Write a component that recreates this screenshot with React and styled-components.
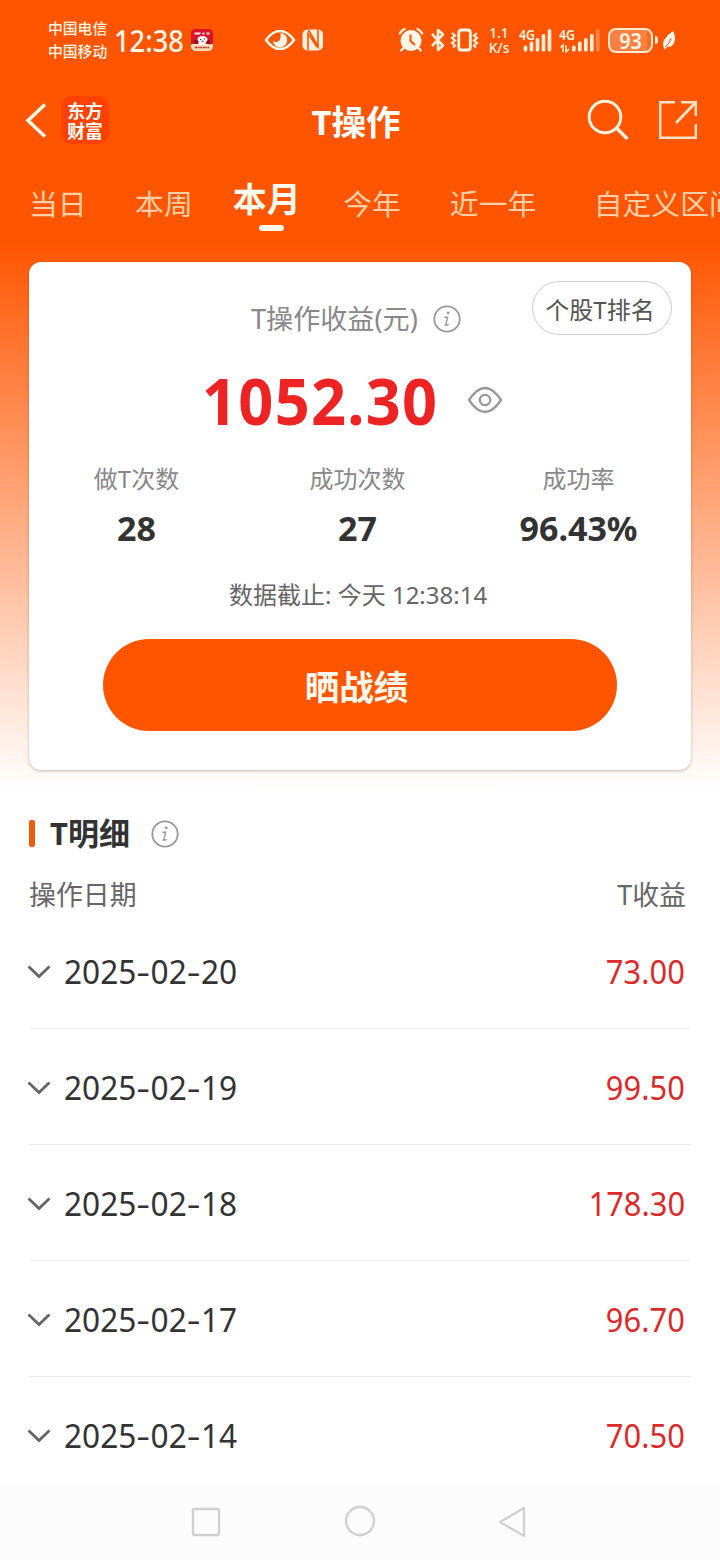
import React from "react";
import styled, { createGlobalStyle } from "styled-components";

const Global = createGlobalStyle`
  * { box-sizing: border-box; }
  body {
    margin: 0;
    background: #fff;
    font-family: "Noto Sans", "Noto Sans CJK SC", sans-serif;
    color: #333;
  }
`;

const Screen = styled.div`
  width: 720px;
  height: 1560px;
  overflow: hidden;
  display: flex;
  flex-direction: column;
  background: linear-gradient(180deg, #ff5500 0, #ff5500 240px, #fff 790px);
`;

/* Text with an optional horizontal condense, kept on one line */
const Label = styled.span`
  display: inline-block;
  white-space: nowrap;
  line-height: 1;
  font-size: ${(p) => p.$size}px;
  font-weight: ${(p) => p.$weight || 400};
  color: ${(p) => p.$color || "inherit"};
  letter-spacing: ${(p) => p.$track || 0}px;
  transform: scaleX(${(p) => p.$stretch || 1});
  transform-origin: ${(p) => p.$origin || "left"} center;
`;

const StatusBar = styled.div`
  height: 80px;
  flex: none;
  display: flex;
  align-items: center;
  padding-left: 48px;
  color: #fff6e8;
`;
const Carriers = styled.div`
  display: flex;
  flex-direction: column;
  gap: 7.5px;
  width: 66px;
`;
const Clock = styled.div`
  width: 75px;
  display: flex;
  padding-top: 2px;
`;
const StatusIcon = styled.svg`
  flex: none;
  display: block;
  margin-left: ${(p) => p.$gap || 0}px;
`;
const Speed = styled.div`
  display: flex;
  flex-direction: column;
  align-items: center;
  width: 24px;
  margin-left: 8px;
  gap: 1px;
  line-height: 14px;
`;
const SpeedText = styled.span`
  font-size: 13.8px;
  line-height: 14px;
  font-weight: 500;
  white-space: nowrap;
`;
const Signal = styled.div`
  position: relative;
  width: ${(p) => p.$width}px;
  height: 26px;
  margin-left: ${(p) => p.$gap}px;
`;
const SignalTag = styled.div`
  position: absolute;
  left: 0;
  top: 0;
  line-height: 1;
  display: flex;
`;
const Battery = styled.div`
  width: 45px;
  height: 25px;
  margin-left: 8px;
  border: 2px solid #ffe9cf;
  border-radius: 8px;
  background: linear-gradient(90deg, #ff8040 90%, #ff6a22 90%);
  display: flex;
  align-items: center;
  justify-content: center;
`;
const BatteryTip = styled.div`
  width: 3px;
  height: 8px;
  margin-left: 1.5px;
  border-radius: 0 3px 3px 0;
  background: #ffe9cf;
`;

const NavBar = styled.header`
  height: 80px;
  flex: none;
  display: grid;
  grid-template-columns: 240px 1fr 240px;
  align-items: center;
  color: #fff;
`;
const NavLeft = styled.div`
  display: flex;
  align-items: center;
  padding-left: 25px;
  gap: 14px;
`;
const NavRight = styled.div`
  display: flex;
  align-items: center;
  justify-content: flex-end;
  padding-right: 22px;
  gap: 29px;
`;
const NavTitle = styled.div`
  display: flex;
  justify-content: center;
  padding: 4px 8px 0 0;
`;
const Brand = styled.div`
  width: 48px;
  height: 48px;
  border-radius: 11px;
  background: #ff4200;
  display: flex;
  flex-direction: column;
  align-items: center;
  justify-content: center;
  font-family: "Noto Sans CJK SC", sans-serif;
  font-weight: 700;
  font-size: 17.8px;
  line-height: 20px;
  color: #fff;
`;

const Tabs = styled.nav`
  height: 102px;
  flex: none;
  display: flex;
  align-items: flex-start;
  overflow: hidden;
`;
const Tab = styled.div`
  flex: none;
  margin-left: ${(p) => p.$gap}px;
  padding-top: ${(p) => (p.$active ? 21 : 29)}px;
  display: flex;
  flex-direction: column;
  align-items: center;
  white-space: nowrap;
  line-height: ${(p) => (p.$active ? 36 : 30)}px;
  font-size: ${(p) => (p.$active ? 34 : 28.8)}px;
  font-weight: ${(p) => (p.$active ? 700 : 400)};
  color: ${(p) => (p.$active ? "#fff9ee" : "#ffd0a8")};
`;
const TabMark = styled.div`
  width: 25px;
  height: 6px;
  margin: 8px 0 0 9px;
  border-radius: 3px;
  background: #fff6e8;
`;

const Card = styled.section`
  flex: none;
  height: 508px;
  margin: 0 29px;
  border-radius: 12px;
  background: #fff;
  box-shadow: 0 1px 3px rgba(90, 50, 30, 0.35);
  display: flex;
  flex-direction: column;
`;
const CardTop = styled.div`
  height: 92px;
  padding: 19px 19px 0 222px;
  display: flex;
  align-items: flex-start;
`;
const CardTitle = styled.div`
  display: flex;
  align-items: center;
  width: 210px;
  justify-content: space-between;
  height: 30px;
  margin-top: 22.5px;
`;
const RankButton = styled.button`
  margin: 0 0 0 auto;
  width: 140px;
  height: 54px;
  padding: 3px 4px 0 0;
  border: 1px solid #ccc;
  border-radius: 27px;
  background: #fff;
  font-family: inherit;
  font-size: 24px;
  line-height: 1;
  color: #555;
`;
const Profit = styled.div`
  height: 91px;
  padding-left: 173px;
  display: flex;
  align-items: center;
`;
const ProfitValue = styled.div`
  width: 265px;
  display: flex;
  padding-top: 3px;
`;
const Stats = styled.div`
  display: grid;
  grid-template-columns: repeat(3, 221px);
  margin-left: -3px;
  height: 115px;
  padding-top: 22px;
`;
const Stat = styled.div`
  display: flex;
  flex-direction: column;
  align-items: center;
  gap: 20px;
`;
const Deadline = styled.div`
  height: 48px;
  margin-top: 11px;
  padding-left: 200px;
  display: flex;
  align-items: center;
`;
const ShareButton = styled.button`
  width: 514px;
  height: 92px;
  margin: 20px auto 0;
  padding: 0 7px 0 0;
  border: 0;
  border-radius: 46px;
  background: #ff5500;
  font-family: inherit;
  font-size: 34.5px;
  font-weight: 700;
  color: #fff9ee;
`;

const SectionHead = styled.div`
  flex: none;
  height: 56px;
  margin-top: 35.5px;
  padding-left: 29px;
  display: flex;
  align-items: center;
`;
const Accent = styled.div`
  width: 6px;
  height: 27px;
  margin-right: 15px;
  border-radius: 2px;
  background: #f25a10;
`;
const HeadText = styled.div`
  width: 101px;
  display: flex;
`;
const Columns = styled.div`
  flex: none;
  height: 51.5px;
  padding: 20px 34px 0 29px;
  display: flex;
  justify-content: space-between;
`;
const Rows = styled.div`
  flex: none;
  height: 570px;
  overflow: hidden;
`;
const Row = styled.div`
  height: 116px;
  margin: 0 29px;
  padding: 2px 6px 0 0;
  border-bottom: 1px solid #ebebeb;
  display: flex;
  align-items: center;
`;
const Toggle = styled.svg`
  width: 24px;
  height: 16px;
  margin: 0 13px 0 -2px;
`;
const Amount = styled.div`
  margin-left: auto;
  display: flex;
`;
const Dash = styled.span`
  display: inline-block;
  width: 14.4px;
  text-align: center;
  transform: scaleX(1.35);
`;

const SystemBar = styled.footer`
  flex: 1;
  background: #fcfcfc;
  display: flex;
  justify-content: center;
`;

const InfoIcon = () => (
  <svg width="28" height="28" viewBox="0 0 28 28" fill="none" stroke="#999">
    <circle cx="14" cy="14" r="12.7" strokeWidth="1.8" />
    <circle cx="15.2" cy="7.8" r="1.4" fill="#999" stroke="none" />
    <path d="M11.4 12.2h3.2l-1.7 7.1q-.3 1.5 2.8 0M11.4 20h3.4" strokeWidth="1.4" />
  </svg>
);

const Bars = ({ x, faded }) =>
  [6, 10, 13.5, 17.5, 22.5].map((h, i) => (
    <rect
      key={h}
      x={x + i * 6}
      y={24.5 - h}
      width="3.6"
      height={h}
      rx="1.6"
      fill={faded && i === 4 ? "#ff8a4a" : "#fff0dc"}
    />
  ));

const tabs = [
  { text: "当日", gap: 29 },
  { text: "本周", gap: 48.5 },
  { text: "本月", gap: 40 },
  { text: "今年", gap: 42.5 },
  { text: "近一年", gap: 49 },
  { text: "自定义区间", gap: 57.5 },
];

const stats = [
  { name: "做T次数", value: "28" },
  { name: "成功次数", value: "27" },
  { name: "成功率", value: "96.43%" },
];

const records = [
  { date: "2025-02-20", amount: "73.00" },
  { date: "2025-02-19", amount: "99.50" },
  { date: "2025-02-18", amount: "178.30" },
  { date: "2025-02-17", amount: "96.70" },
  { date: "2025-02-14", amount: "70.50" },
];

const DateText = ({ value }) => {
  const [y, m, d] = value.split("-");
  return (
    <Label $size={32} $stretch={0.988}>
      {y}<Dash>-</Dash>{m}<Dash>-</Dash>{d}
    </Label>
  );
};

const Status = () => (
  <StatusBar>
    <Carriers>
      <Label $size={14.8} $weight={500}>中国电信</Label>
      <Label $size={14.8} $weight={500}>中国移动</Label>
    </Carriers>
    <Clock>
      <Label $size={30} $weight={500} $stretch={0.91}>12:38</Label>
    </Clock>
    <StatusIcon $gap={2} width="22" height="22" viewBox="0 0 22 22">
      <rect width="22" height="22" rx="4.5" fill="#d8132c" />
      <path d="M0 15h22v2.500a4.500 4.500 0 0 1-4.500 4.500h-13a4.500 4.500 0 0 1-4.500-4.500z" fill="#ffd9b0" />
      <path d="M3.500 4.500h6M11.500 4.500h2M15.500 4.500h3" stroke="#ffe9e0" strokeWidth="2" />
      <path d="M3 13l4-2M19 13l-4-2" stroke="#8a0f20" strokeWidth="2.400" />
      <ellipse cx="11.500" cy="10.500" rx="5" ry="3.400" fill="#fff" />
      <ellipse cx="11" cy="14.200" rx="3.600" ry="2" fill="#fff" />
      <path d="M9 10.500h1.200M13 10h1.200M10.500 12.300h2M4 14.500l3-1M16 13.500l3 1.500" stroke="#6b1420" strokeWidth="1.100" />
      <path d="M4 18.500h14" stroke="#b8302c" strokeWidth="1.600" strokeDasharray="2 .6" />
    </StatusIcon>
    <StatusIcon $gap={51} width="32" height="24" viewBox="0 0 32 24">
      <path d="M2 12Q8.500 3 16 3t14 9q-6.500 9-14 9T2 12z" fill="none" stroke="#fff6e8" strokeWidth="2.600" />
      <path d="M16.500 5A7.200 7.200 0 1 1 8.800 12.500q1.200 1.800 3.700 1.600 4.800-.6 4-9.100z" fill="#fff6e8" />
    </StatusIcon>
    <StatusIcon $gap={6} width="22" height="24" viewBox="0 0 22 24">
      <rect x=".5" y="1.500" width="20.500" height="21" rx="5" fill="#fff0dc" />
      <path d="M6 22.500V5.500l9.500 14M6.500 2l9.500 16.500V1.500" fill="none" stroke="#ff5500" strokeWidth="1.600" />
    </StatusIcon>
    <StatusIcon $gap={74} width="26" height="26" viewBox="0 0 26 26">
      <circle cx="13" cy="13.500" r="10.500" fill="#fff6e8" />
      <path d="M2 7Q3.500 4 7 2.500M24 7Q22.500 4 19 2.500M6 22l-2 2M20 22l2 2" stroke="#ff5500" strokeWidth="4.500" fill="none" />
      <path d="M1.800 6.500Q3.300 3.500 6.500 2M24.200 6.500Q22.700 3.500 19.500 2M5.500 21l-2.300 2.500M20.500 21l2.300 2.500" stroke="#fff6e8" strokeWidth="2.300" fill="none" strokeLinecap="round" />
      <path d="M12.500 7.500v6.500l4.500 4" stroke="#ff5500" strokeWidth="2" fill="none" />
    </StatusIcon>
    <StatusIcon $gap={6} width="16" height="24" viewBox="0 0 16 24">
      <path d="M2 6l11 11.500-5 4.500V2l5 4.500L2 18" fill="none" stroke="#fff0dc" strokeWidth="2.600" strokeLinejoin="round" />
    </StatusIcon>
    <StatusIcon $gap={4} width="29" height="24" viewBox="0.500 0 29 24">
      <rect x="9.300" y="2" width="11.500" height="20" rx="2.500" fill="none" stroke="#fff6e8" strokeWidth="2.800" />
      <path d="M2.500 5l3 2.500-3 2.500 3 2.500-3 2.500 3 2.500-2 2M27.500 5l-3 2.500 3 2.500-3 2.500 3 2.500-3 2.500 2 2" fill="none" stroke="#fff0dc" strokeWidth="2.200" />
    </StatusIcon>
    <Speed>
      <SpeedText>1.1</SpeedText>
      <SpeedText>K/s</SpeedText>
    </Speed>
    <Signal $width={34} $gap={8}>
      <StatusIcon width="34" height="26"><Bars x={4.700} /></StatusIcon>
      <SignalTag><Label $size={15} $weight={600} $stretch={0.82}>4G</Label></SignalTag>
    </Signal>
    <Signal $width={41} $gap={6}>
      <StatusIcon width="41" height="26">
        <Bars x={13} faded />
        <path d="M4 25v-7l-2.500 2.500M7 18v7l3-3" fill="none" stroke="#fff0dc" strokeWidth="1.500" />
      </StatusIcon>
      <SignalTag><Label $size={15} $weight={600} $stretch={0.82}>4G</Label></SignalTag>
    </Signal>
    <Battery><Label $size={22} $weight={600} $origin="center" $stretch={0.9}>93</Label></Battery>
    <BatteryTip />
    <StatusIcon $gap={4} width="14" height="20" viewBox="0 0 14 20">
      <path d="M11 1Q15 8 11.500 14 9 18 5.500 16.500L3 19.500 2.300 19Q0 14 2 10 5 5 11 1z" fill="#fff6e8" />
      <path d="M9 8Q8.500 12 3.500 17" stroke="#ff5500" strokeWidth="1" fill="none" />
    </StatusIcon>
  </StatusBar>
);

export default function App() {
  return (
    <>
      <Global />
      <Screen>
        <Status />
        <NavBar>
          <NavLeft>
            <svg width="22" height="36" viewBox="0 0 22 36" fill="none" stroke="#fff6e8" strokeWidth="3.600">
              <path d="M20 2.500L3 18.500l17 16" />
            </svg>
            <Brand><span>东方</span><span>财富</span></Brand>
          </NavLeft>
          <NavTitle><Label $size={34.600} $weight={700}>T操作</Label></NavTitle>
          <NavRight>
            <svg width="42" height="42" viewBox="0 0 42 42" fill="none" stroke="#fff0dc" strokeWidth="3">
              <circle cx="18" cy="18" r="15.800" />
              <path d="M29 28.500L40.500 40" strokeWidth="3.300" />
            </svg>
            <svg width="40" height="40" viewBox="0 0 40 40" fill="none" stroke="#ffe4c8" strokeWidth="2.400">
              <path d="M17 2.200H2.200v35.600h35.600V24M23 2.200h14.800V16" />
              <path d="M37.500 2.500L18 23" strokeWidth="2.800" />
            </svg>
          </NavRight>
        </NavBar>
        <Tabs>
          {tabs.map((t) => {
            const active = t.text === "本月";
            return (
              <Tab key={t.text} $gap={t.gap} $active={active}>
                {t.text}
                {active && <TabMark />}
              </Tab>
            );
          })}
        </Tabs>
        <Card>
          <CardTop>
            <CardTitle>
              <Label $size={27.100} $color="#888">T操作收益(元)</Label>
              <InfoIcon />
            </CardTitle>
            <RankButton>个股T排名</RankButton>
          </CardTop>
          <Profit>
            <ProfitValue><Label $size={64} $weight={700} $color="#ee2424" $track={1.3} $stretch={0.958}>1052.30</Label></ProfitValue>
            <svg width="36" height="28" viewBox="0 0 36 28" fill="none" stroke="#999" strokeWidth="2.300">
              <path d="M2 14Q10 2 18 2t16 12Q26 26 18 26T2 14z" />
              <circle cx="18" cy="14" r="5.200" />
            </svg>
          </Profit>
          <Stats>
            {stats.map((s) => (
              <Stat key={s.name}>
                <Label $size={24} $color="#888">{s.name}</Label>
                <Label $size={34} $weight={700}>{s.value}</Label>
              </Stat>
            ))}
          </Stats>
          <Deadline><Label $size={24} $color="#666">数据截止: 今天 12:38:14</Label></Deadline>
          <ShareButton>晒战绩</ShareButton>
        </Card>
        <SectionHead>
          <Accent />
          <HeadText><Label $size={31} $weight={700}>T明细</Label></HeadText>
          <InfoIcon />
        </SectionHead>
        <Columns>
          <Label $size={26.900} $color="#666">操作日期</Label>
          <Label $size={26.900} $color="#666">T收益</Label>
        </Columns>
        <Rows>
          {records.map((r) => (
            <Row key={r.date}>
              <Toggle viewBox="0 0 24 16" fill="none" stroke="#666" strokeWidth="2.800">
                <path d="M1.500 2.500L12 12.500l10.500-10" />
              </Toggle>
              <DateText value={r.date} />
              <Amount><Label $size={32} $color="#dc2a2a" $origin="right" $stretch={0.965}>{r.amount}</Label></Amount>
            </Row>
          ))}
        </Rows>
        <SystemBar>
          <svg width="400" height="77" viewBox="160 1483 400 77" fill="none" stroke="#d0d0d0" strokeWidth="2.300" strokeLinejoin="round">
            <rect x="193" y="1509" width="26" height="26" rx="1" />
            <circle cx="360" cy="1521" r="14" />
            <path d="M500 1522l24-14v28z" />
          </svg>
        </SystemBar>
      </Screen>
    </>
  );
}
